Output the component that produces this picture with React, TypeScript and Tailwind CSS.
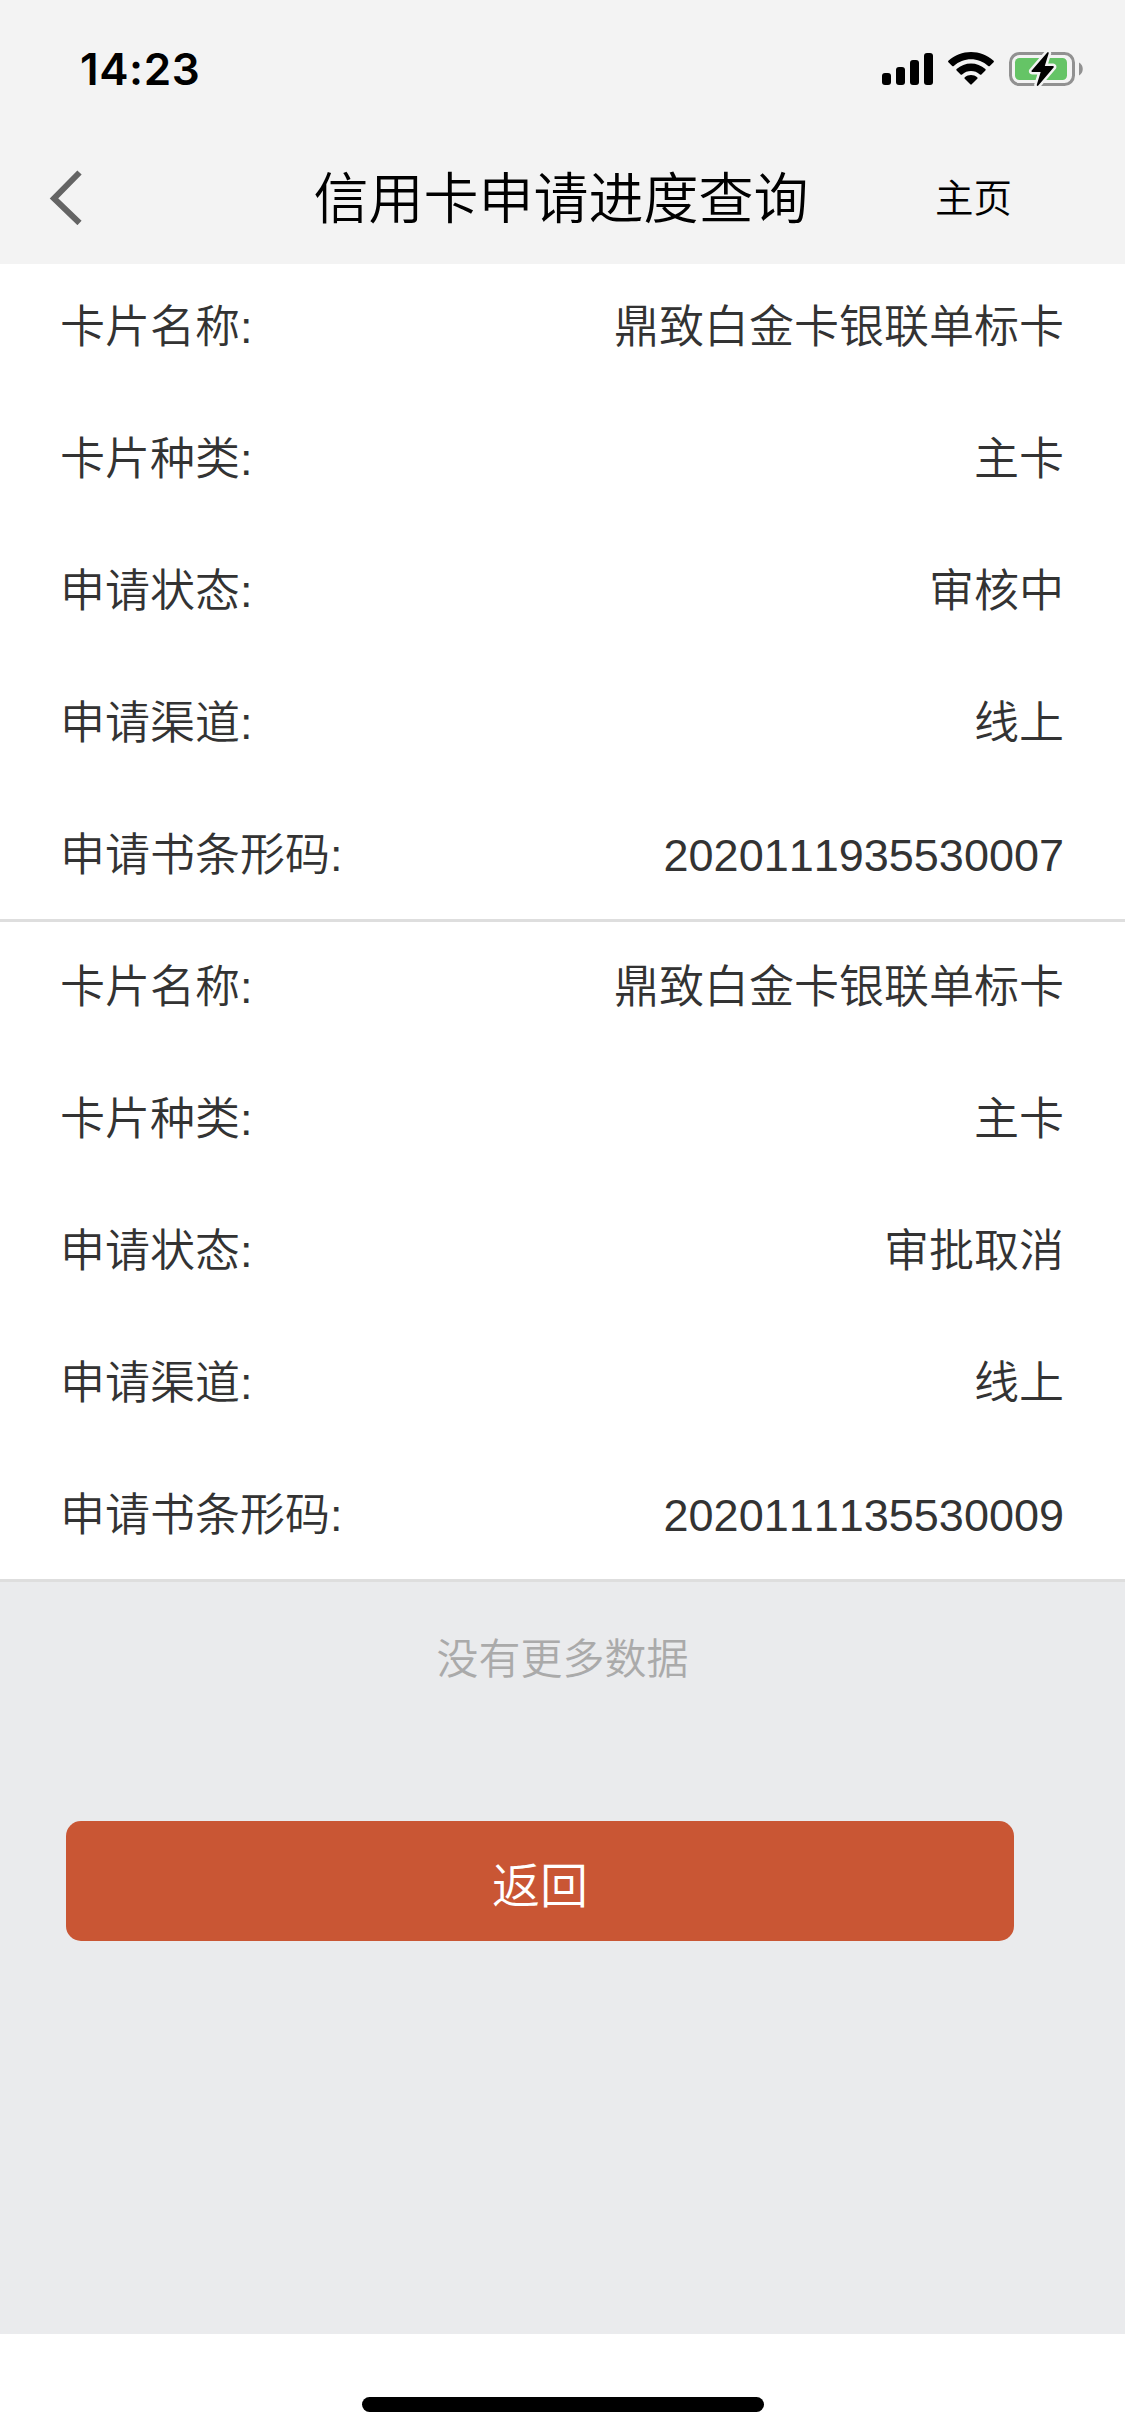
const APPLICATIONS = [
  {
    name: "鼎致白金卡银联单标卡",
    kind: "主卡",
    status: "审核中",
    channel: "线上",
    barcode: "2020111935530007",
  },
  {
    name: "鼎致白金卡银联单标卡",
    kind: "主卡",
    status: "审批取消",
    channel: "线上",
    barcode: "2020111135530009",
  },
];

function StatusBar() {
  return (
    <div className="flex h-[132px] items-start justify-between pl-20 pr-[42px]">
      <span className="mt-[43px] font-['Inter'] text-[44px] leading-[52px] font-semibold tracking-[0.6px] text-black">
        14:23
      </span>
      <div className="mt-[50px] flex h-[38px] items-start">
        <svg className="mt-[3px] h-8 w-[51px]" viewBox="0 0 51 32">
          <rect x="0" y="20" width="9" height="12" rx="3" />
          <rect x="14" y="14" width="9" height="18" rx="3" />
          <rect x="28" y="7" width="9" height="25" rx="3" />
          <rect x="42" y="0" width="9" height="32" rx="3" />
        </svg>
        <svg className="ml-[15px] mt-0.5 h-[33px] w-[46px]" viewBox="0 0 46 33">
          <path d="M0.4 10.2Q-.3 9.5 .4 8.8C13 -2.9 33 -2.9 45.6 8.8Q46.3 9.5 45.6 10.2L41.8 14Q41 14.7 40.2 14C30.5 5 15.5 5 5.8 14Q5 14.7 4.2 14Z" />
          <path d="M8.6 18.5Q7.9 17.8 8.6 17.1C16.7 9.5 29.3 9.5 37.4 17.1Q38.1 17.8 37.4 18.5L33.4 22.4Q32.7 23.1 31.9 22.4C26.8 17.9 19.2 17.9 14.1 22.4Q13.3 23.1 12.6 22.4Z" />
          <path d="M16.7 26.7Q16 26 16.8 25.3C20.4 22.3 25.6 22.3 29.2 25.3Q30 26 29.3 26.7L23.7 32.3Q23 33 22.3 32.3Z" />
        </svg>
        <svg className="ml-[15px] h-[38px] w-[74px]" viewBox="0 0 74 38">
          <rect x="1.5" y="3.5" width="63" height="31" rx="9" fill="none" stroke="#919191" strokeWidth="3" />
          <rect x="6" y="8" width="52" height="22" rx="4.5" fill="#65c466" />
          <path d="M70 12.5C75 15 75 23 70 25.5Z" fill="#919191" />
          <path
            d="M38.3 2.4L22.5 20.8Q22 21.9 23.2 21.9H31.7L27.7 35Q28 36.5 29.3 35.5L44.8 17.2Q45.2 16 44 15.9H35.8L39.7 3.2Q39.5 1.5 38.3 2.4Z"
            stroke="#f3f3f3"
            strokeWidth="5"
            paintOrder="stroke"
          />
        </svg>
      </div>
    </div>
  );
}

function NavBar() {
  return (
    <div className="grid h-[132px] grid-cols-[300px_522px_303px] items-start text-black">
      <button className="mt-[37px] ml-[49px] w-9" aria-label="返回">
        <svg className="h-14 w-9" viewBox="0 0 36 56" fill="none" stroke="#646464" strokeWidth="6">
          <path d="M30.500 3.500L5 29.500L30.500 54" />
        </svg>
      </button>
      <h1 className="mt-[29px] text-center text-[55px] leading-[76px] whitespace-nowrap">
        信用卡申请进度查询
      </h1>
      <a className="mt-[40px] ml-[113px] text-[38.5px] leading-[54px]">主页</a>
    </div>
  );
}

function Row({ label, value }: { label: string; value: string }) {
  return (
    <div className="flex items-center justify-between text-[45px] leading-[64px] text-[#333]">
      <span>{label}:</span>
      <span>{value}</span>
    </div>
  );
}

export default function App() {
  return (
    <div className="flex h-[2436px] w-[1125px] flex-col overflow-hidden bg-white font-['Liberation_Sans','Noto_Sans_CJK_SC',sans-serif] font-[350] [font-kerning:none]">
      <header className="h-[264px] shrink-0 bg-[#f3f3f3]">
        <StatusBar />
        <NavBar />
      </header>

      <main className="flex-1 bg-[#eaebed]">
        {APPLICATIONS.map((a, i) => (
          <section
            key={a.barcode}
            className={`flex flex-col gap-[68px] border-b-3 border-[#dedede] bg-white pr-[61px] pl-[60px] ${i === 0 ? "h-[658px] pt-8" : "h-[660px] pt-[34px]"}`}
          >
            <Row label="卡片名称" value={a.name} />
            <Row label="卡片种类" value={a.kind} />
            <Row label="申请状态" value={a.status} />
            <Row label="申请渠道" value={a.channel} />
            <Row label="申请书条形码" value={a.barcode} />
          </section>
        ))}

        <p className="mt-[48px] text-center text-[42px] leading-[60px] text-[#aaa]">没有更多数据</p>

        <button className="mt-[131px] ml-[66px] flex h-[120px] w-[948px] items-center justify-center rounded-[15px] bg-[#c95634] pt-[11px] text-[48px] leading-[68px] text-white">
          返回
        </button>
      </main>

      <footer className="flex h-[102px] shrink-0 items-start justify-center bg-white pt-[63px]">
        <div className="h-[15px] w-[402px] rounded-full bg-black" />
      </footer>
    </div>
  );
}
